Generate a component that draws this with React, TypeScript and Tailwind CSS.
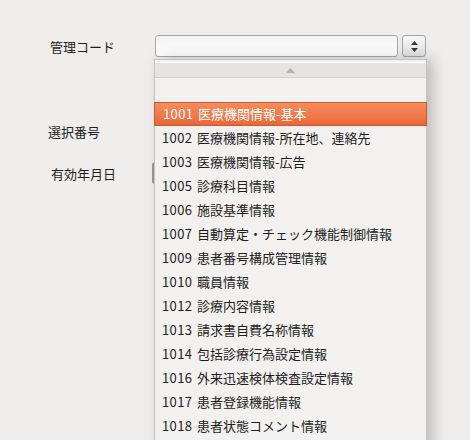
const items: [string, string][] = [
  ['1001', '医療機関情報-基本'],
  ['1002', '医療機関情報-所在地、連絡先'],
  ['1003', '医療機関情報-広告'],
  ['1005', '診療科目情報'],
  ['1006', '施設基準情報'],
  ['1007', '自動算定・チェック機能制御情報'],
  ['1009', '患者番号構成管理情報'],
  ['1010', '職員情報'],
  ['1012', '診療内容情報'],
  ['1013', '請求書自費名称情報'],
  ['1014', '包括診療行為設定情報'],
  ['1016', '外来迅速検体検査設定情報'],
  ['1017', '患者登録機能情報'],
  ['1018', '患者状態コメント情報'],
];

const font = { fontFamily: '"Noto Sans CJK JP", "DejaVu Sans", sans-serif' };

export default function App() {
  return (
    <div
      className="relative w-[470px] h-[440px] overflow-hidden bg-[#efeeec] text-[13px] text-[#1e1e1e]"
      style={font}
    >
      {/* form */}
      <div className="flex flex-col pt-[35px]">
        <div className="flex items-center h-[22px]">
          <div className="w-[155px] pl-[50px] leading-none">管理コード</div>
          <div className="w-[243px] h-[22px] rounded-[3px] border border-[#a9a9a9] bg-gradient-to-b from-[#f3f3f3] to-white" />
          <button className="ml-[4px] w-[24px] h-[22px] rounded-[3px] border border-[#a3a3a3] bg-gradient-to-b from-[#f6f6f6] to-[#e2e2e2] flex flex-col items-center justify-center gap-[3px]">
            <svg width="7" height="4" viewBox="0 0 7 4"><path d="M3.5 0L7 4H0Z" fill="#3a3a3a" /></svg>
            <svg width="7" height="4" viewBox="0 0 7 4"><path d="M0 0H7L3.5 4Z" fill="#3a3a3a" /></svg>
          </button>
        </div>
        <div className="flex items-center h-[22px] mt-[63px]">
          <div className="w-[155px] pl-[48px] leading-none">選択番号</div>
          <div className="w-[120px] h-[22px] rounded-[3px] border border-[#a9a9a9] bg-white" />
        </div>
        <div className="flex items-center h-[22px] mt-[20px]">
          <div className="w-[152px] pl-[51px] leading-none">有効年月日</div>
          <div className="w-[120px] h-[22px] rounded-[3px] border-l-2 border border-[#9a9a9a] bg-white" />
        </div>
      </div>

      {/* popup list */}
      <div className="absolute left-[154px] top-[59px] w-[273px] h-[420px] border border-[#c4c3c1] bg-[#f2f1ef] shadow-[6px_0_14px_rgba(0,0,0,0.22)] pt-[2px]">
        <div className="h-[16px] border-t border-white border-b border-b-[#d2d1cf] bg-[#e5e4e2] flex items-center justify-center">
          <svg width="9" height="5" viewBox="0 0 9 5"><path d="M4.5 0L9 5H0Z" fill="#b3b2b0" /></svg>
        </div>
        <div className="h-[24px]" />
        {items.map(([code, name], i) => (
          <div
            key={code}
            className={
              i === 0
                ? 'h-[24px] -mx-px flex items-center pl-[8px] text-white border border-[#c95a2e] bg-gradient-to-b from-[#f78c5d] to-[#e9683a]'
                : 'h-[24px] flex items-center pl-[7px]'
            }
          >
            <span className="w-[35px] tracking-[0.4px]">{code}</span>
            <span>{name}</span>
          </div>
        ))}
      </div>
    </div>
  );
}
